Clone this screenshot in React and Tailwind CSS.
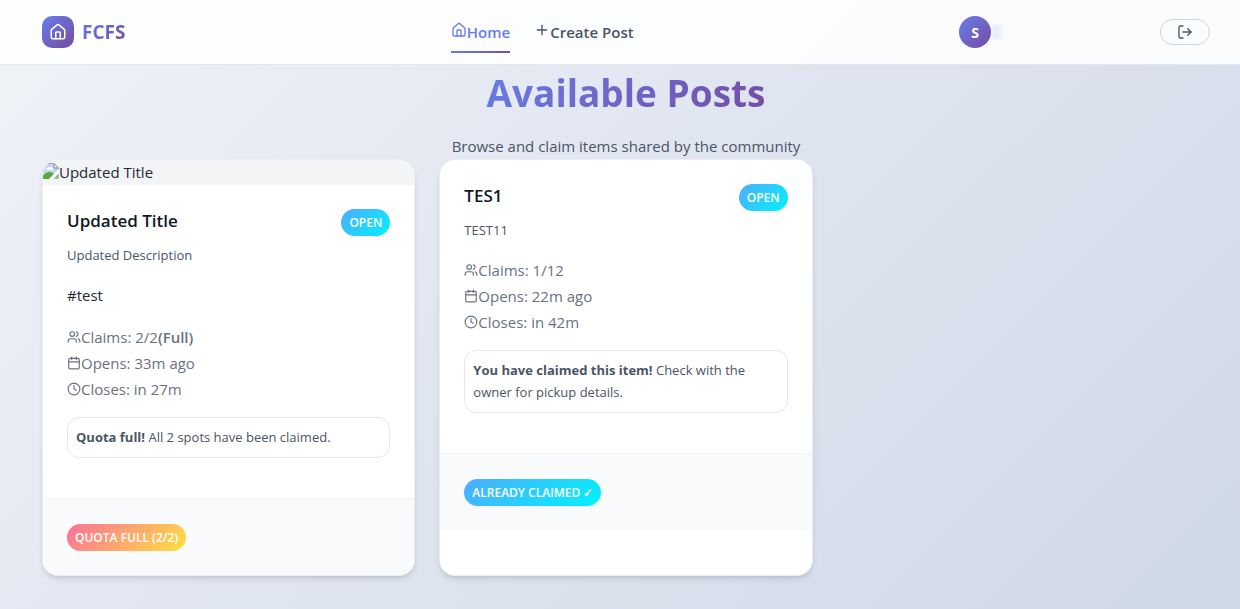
import { House, Plus, LogOut, Users, Calendar, Clock } from "lucide-react";

const posts = [
  {
    title: "Updated Title",
    description: "Updated Description",
    image: true,
    tag: "#test",
    claims: "2/2",
    full: true,
    opens: "33m ago",
    closes: "in 27m",
    lead: "Quota full!",
    note: "All 2 spots have been claimed.",
    action: "QUOTA FULL (2/2)",
    tone: "warm",
  },
  {
    title: "TES1",
    description: "TEST11",
    claims: "1/12",
    opens: "22m ago",
    closes: "in 42m",
    lead: "You have claimed this item!",
    note: "Check with the owner for pickup details.",
    action: "ALREADY CLAIMED ✓",
    tone: "cool",
  },
];

const tones = {
  cool: "bg-[linear-gradient(135deg,#4facfe_0%,#00f2fe_100%)]",
  warm: "bg-[linear-gradient(135deg,#fa709a_0%,#fee140_100%)]",
};

function Badge({ tone, children }) {
  return (
    <span
      className={`inline-flex h-[27px] shrink-0 items-center rounded-full px-2 text-[12px] font-semibold whitespace-nowrap text-white ${tones[tone]}`}
    >
      {children}
    </span>
  );
}

function BrokenImage() {
  return (
    <svg width="16" height="16" viewBox="0 0 16 16" className="-mt-1 shrink-0" aria-hidden="true">
      <path d="M0 0h11l5 5v11H0z" fill="#c3d5f5" />
      <path d="M11 0.500v4.500h4.500z" fill="#fff" stroke="#8a8a8a" />
      <path d="M0 0.500h11M15.500 5v5" stroke="#a3a9b4" fill="none" />
      <path d="M3 7q0-2 2-2 1-2 3-1 2 0 2 3z" fill="#fff" />
      <path d="M0 16v-3q3-4 6-4 3 0 5 2l-5 5z" fill="#56ab36" />
      <path d="M16 6L6 16h4l6-6z" fill="#fff" />
      <path d="M11 15.500l4.500-4.500v4.500z" fill="#7fb96c" />
    </svg>
  );
}

function MetaRow({ icon: Icon, children }) {
  return (
    <li className="flex items-center">
      <Icon size={14} strokeWidth={2} className="shrink-0" />
      <span>{children}</span>
    </li>
  );
}

function PostCard({ post }) {
  return (
    <article className="overflow-hidden rounded-2xl border border-gray-200/70 bg-white shadow-md">
      {post.image && (
        <div role="img" aria-label={post.title} className="flex h-[25px] items-center bg-gray-100">
          <BrokenImage />
          <span>{post.title}</span>
        </div>
      )}
      <div className="px-6 pt-6 pb-10">
        <div className="mb-2 flex items-start justify-between">
          <h2 className="text-[17px] leading-6 font-semibold text-gray-900">{post.title}</h2>
          <Badge tone="cool">OPEN</Badge>
        </div>
        <p className="mb-4 text-[13px] leading-[22px] text-gray-600">{post.description}</p>
        {post.tag && <p className="mb-4 leading-[26px]">{post.tag}</p>}
        <ul className="leading-[26px] text-gray-500">
          <MetaRow icon={Users}>
            Claims: {post.claims}
            {post.full && <span className="font-semibold">(Full)</span>}
          </MetaRow>
          <MetaRow icon={Calendar}>Opens: {post.opens}</MetaRow>
          <MetaRow icon={Clock}>Closes: {post.closes}</MetaRow>
        </ul>
        <p className="mt-[15px] rounded-xl border border-gray-200 px-2 pt-2 pb-[9px] text-[13px] leading-[22px] text-gray-600">
          <strong className="font-bold">{post.lead}</strong> {post.note}
        </p>
      </div>
      <div className="flex border-t border-gray-100 bg-[#f9fafc] px-6 pt-[25px] pb-6">
        <Badge tone={post.tone}>{post.action}</Badge>
      </div>
    </article>
  );
}

export default function App() {
  return (
    <div className="min-h-screen bg-[linear-gradient(135deg,#f1f3f6_0%,#eaeef6_14%,#cfd8e7_100%)] font-['Open_Sans','Noto_Sans',sans-serif] text-[15px] text-gray-800">
      <header className="border-b border-gray-200 bg-white/90">
        <div className="flex h-16 items-center justify-between pr-[30px] pl-[42px]">
          <a href="#" className="flex items-center gap-2">
            <span className="flex size-8 items-center justify-center rounded-[10px] bg-[linear-gradient(135deg,#667eea_0%,#764ba2_100%)] text-white">
              <House size={18} />
            </span>
            <span className="bg-[linear-gradient(135deg,#667eea_0%,#764ba2_100%)] bg-clip-text text-[19px] font-bold text-transparent">
              FCFS
            </span>
          </a>
          <nav className="flex h-[42px] gap-6 font-semibold">
            <a href="#" className="flex flex-col text-[#667eea]">
              <span className="-mb-0.5 flex h-[42px] items-center">
                <House size={16} className="-mt-1" />
                Home
              </span>
              <span className="h-0.5 shrink-0 bg-[linear-gradient(135deg,#667eea_0%,#764ba2_100%)]" />
            </a>
            <a href="#" className="flex h-[42px] items-center text-gray-600">
              <Plus size={16} className="-mt-1" />
              Create Post
            </a>
          </nav>
          <div className="flex items-center">
            <span className="flex size-8 items-center justify-center rounded-full bg-[linear-gradient(135deg,#667eea_0%,#764ba2_100%)] text-[14px] font-bold text-white">
              S
            </span>
            <span className="flex w-[169px] overflow-hidden pl-0.5">
              <span className="h-4 w-3 bg-[linear-gradient(90deg,#667eea40,transparent)] blur-[3px]" />
            </span>
            <button
              type="button"
              aria-label="Log out"
              className="flex h-[26px] w-[50px] items-center justify-center rounded-full border border-gray-300 text-gray-600"
            >
              <LogOut size={16} />
            </button>
          </div>
        </div>
      </header>
      <main className="pr-[30px] pb-8 pl-[42px]">
        <div className="text-center">
          <h1>
            <span className="inline-block bg-[linear-gradient(135deg,#667eea_0%,#764ba2_100%)] bg-clip-text text-[37px] leading-[56px] font-bold text-transparent">
              Available Posts
            </span>
          </h1>
          <p className="mt-3 leading-[26px] text-gray-600">Browse and claim items shared by the community</p>
        </div>
        <div className="grid grid-cols-3 gap-6">
          {posts.map((post) => (
            <PostCard key={post.title} post={post} />
          ))}
        </div>
      </main>
    </div>
  );
}
